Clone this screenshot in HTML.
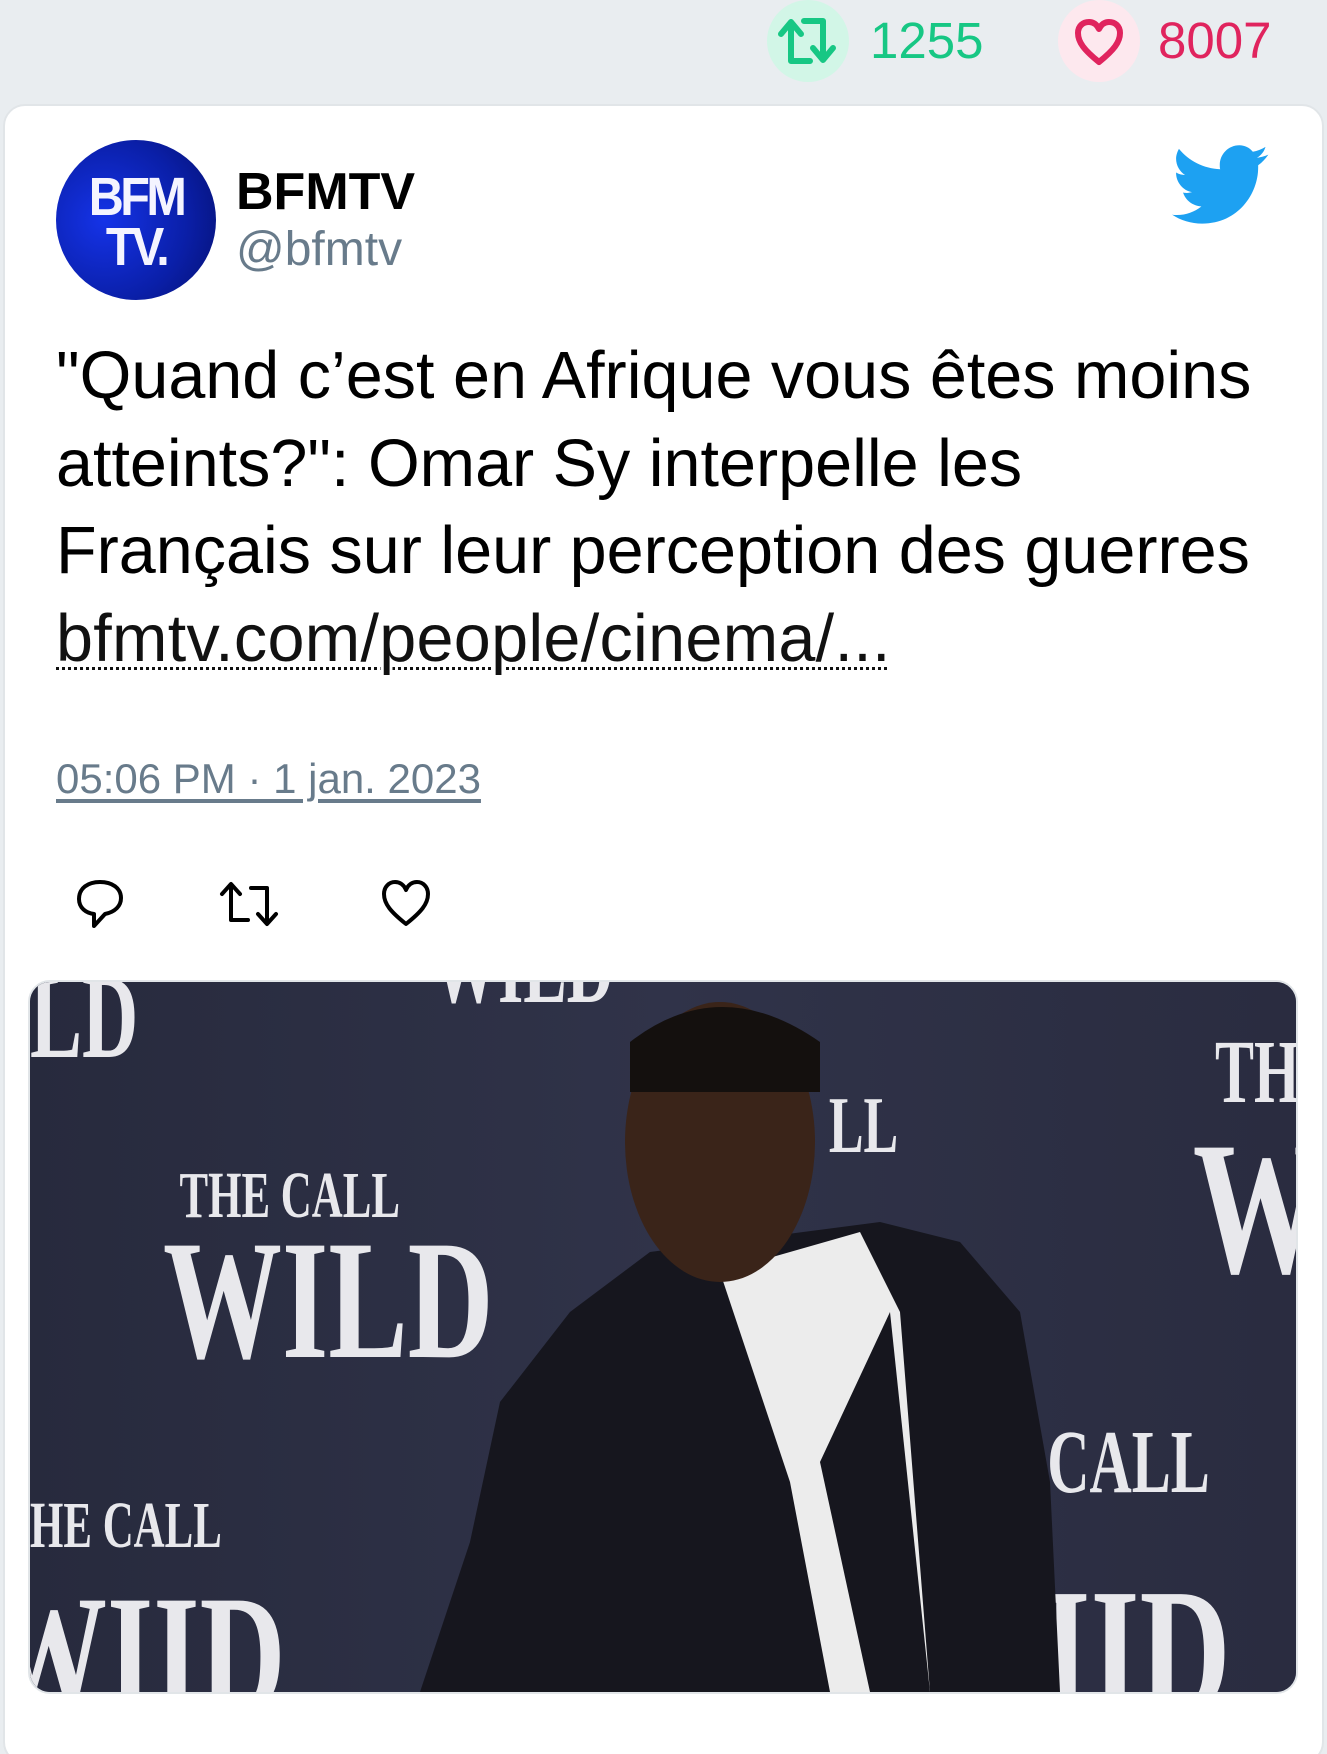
<!DOCTYPE html>
<html><head><meta charset="utf-8"><style>
*{margin:0;padding:0;box-sizing:border-box}
html,body{width:1327px;height:1754px;background:#e9edf0;font-family:"Liberation Sans",Arial,sans-serif;overflow:hidden;position:relative}
.abs{position:absolute}
.card{left:3px;top:104px;width:1321px;height:1660px;background:#fff;border:2px solid #e1e5e8;border-radius:22px}
.cnt{font-size:51px;line-height:50px;top:16px}
.txt{left:56px;top:333px;font-size:66.5px;line-height:87.5px;color:#000;width:1300px;white-space:nowrap}
.txt a{color:#111;text-decoration:underline dotted;text-decoration-thickness:3px;text-underline-offset:6px;letter-spacing:0.3px}
.ts{left:56px;top:755px;font-size:42px;color:#687b8b;text-decoration:underline;text-underline-offset:6px}
</style></head><body>
<div class="abs" style="left:767px;top:0;width:82px;height:82px;border-radius:50%;background:#d2f6e7"></div>
<svg class="abs" style="left:778px;top:16px" width="60" height="50" viewBox="0 0 60 50"><g fill="none" stroke="#17c784" stroke-width="6" stroke-linejoin="round" stroke-linecap="round"><path d="M13 45 V10 M3 18 L13 6 L23 18 M13 45 H32"/><path d="M45 5 V40 M35 32 L45 44 L55 32 M45 5 H26"/></g></svg>
<div class="abs cnt" style="left:870px;color:#17c784">1255</div>
<div class="abs" style="left:1058px;top:0;width:82px;height:82px;border-radius:50%;background:#fde8ee"></div>
<svg class="abs" style="left:1074px;top:18px" width="50" height="48" viewBox="0 0 50 48"><path d="M25 44 C10 32 4 24 4 15 C4 8 9 4 15 4 C20 4 23 7 25 11 C27 7 30 4 35 4 C41 4 46 8 46 15 C46 24 40 32 25 44Z" fill="none" stroke="#e0245e" stroke-width="6" stroke-linejoin="round"/></svg>
<div class="abs cnt" style="left:1158px;color:#e0245e">8007</div>

<div class="abs card"></div>
<div class="abs" style="left:56px;top:140px;width:160px;height:160px;border-radius:50%;background:radial-gradient(circle at 30% 50%,#1533e8,#0a1fa8 60%,#061070)"></div>
<div class="abs" style="left:76px;top:172px;width:120px;font:bold 54px/50px 'Liberation Sans';color:#f4f4ff;text-align:center;letter-spacing:-4px;transform:scaleX(0.9)">BFM<br>TV.</div>
<div class="abs" style="left:236px;top:162px;font-weight:bold;font-size:52px;color:#000">BFMTV</div>
<div class="abs" style="left:236px;top:222px;font-size:48px;color:#687b8b">@bfmtv</div>
<svg class="abs" style="left:1172px;top:145px" width="98" height="80" viewBox="0 0 24 19.5"><path fill="#1da1f2" d="M23.6 2.3c-.9.4-1.8.6-2.8.8 1-.6 1.8-1.6 2.1-2.7-.9.6-2 1-3.1 1.2C19 .6 17.8 0 16.5 0c-2.7 0-4.8 2.2-4.8 4.8 0 .4 0 .8.1 1.1C7.7 5.7 4.1 3.8 1.7.9c-.4.7-.7 1.6-.7 2.4 0 1.7.9 3.2 2.2 4-.8 0-1.5-.2-2.2-.6v.1c0 2.3 1.7 4.3 3.9 4.7-.4.1-.8.2-1.3.2-.3 0-.6 0-.9-.1.6 1.9 2.4 3.3 4.5 3.4-1.7 1.3-3.7 2.1-6 2.1-.4 0-.8 0-1.2-.1 2.1 1.4 4.7 2.2 7.4 2.2 8.9 0 13.7-7.4 13.7-13.7v-.6c1-.7 1.8-1.6 2.5-2.6z"/></svg>

<div class="abs txt">"Quand c’est en Afrique vous êtes moins<br>atteints?": Omar Sy interpelle les<br>Français sur leur perception des guerres<br><a>bfmtv.com/people/cinema/...</a></div>
<div class="abs ts">05:06 PM · 1 jan. 2023</div>

<svg class="abs" style="left:74px;top:878px" width="52" height="52" viewBox="0 0 52 52"><path d="M26 4 C14 4 5 10 5 21 C5 30 12 35 20 36 L20 48 L31 36 C41 34 47 28 47 20 C47 10 38 4 26 4Z" fill="none" stroke="#000" stroke-width="4" stroke-linejoin="round"/></svg>
<svg class="abs" style="left:218px;top:880px" width="64" height="48" viewBox="0 0 64 48"><g fill="none" stroke="#000" stroke-width="4" stroke-linejoin="round" stroke-linecap="round"><path d="M13 5 V40 H30 M4 14 L13 4 L22 14"/><path d="M49 43 V8 H33 M40 34 L49 44 L58 34"/></g></svg>
<svg class="abs" style="left:380px;top:878px" width="52" height="50" viewBox="0 0 52 50"><path d="M26 46 C11 34 4 26 4 16 C4 9 9 4 15 4 C20 4 24 7 26 12 C28 7 32 4 37 4 C43 4 48 9 48 16 C48 26 41 34 26 46Z" fill="none" stroke="#000" stroke-width="4" stroke-linejoin="round"/></svg>

<div class="abs" style="left:28px;top:980px;width:1270px;height:714px;border:2px solid #e1e5e8;border-radius:22px;overflow:hidden;background:#2c2e44">
<svg width="1266" height="710" viewBox="0 0 1266 710" style="display:block">
<defs><linearGradient id="bg" x1="0" x2="1"><stop offset="0" stop-color="#272a3d"/><stop offset="0.5" stop-color="#303349"/><stop offset="1" stop-color="#2a2c40"/></linearGradient></defs>
<rect width="1266" height="710" fill="url(#bg)"/>
<g fill="#e8e8ec" font-family="Liberation Serif,serif" font-weight="bold">
<text x="0" y="75" font-size="120" transform="scale(0.65,1)">LD</text>
<text x="230" y="235" font-size="66" transform="scale(0.65,1)">THE CALL</text>
<text x="190" y="375" font-size="170" transform="scale(0.7,1)">WILD</text>
<text x="0" y="565" font-size="66" transform="scale(0.65,1)">HE CALL</text>
<text x="-60" y="730" font-size="170" transform="scale(0.7,1)">WIID</text>
<text x="1823" y="120" font-size="90" transform="scale(0.65,1)">TH</text>
<text x="1661" y="290" font-size="190" transform="scale(0.7,1)">W</text>
<text x="1565" y="510" font-size="90" transform="scale(0.65,1)">CALL</text>
<text x="1445" y="730" font-size="180" transform="scale(0.7,1)">IID</text>
<text x="1229" y="170" font-size="80" transform="scale(0.65,1)">LL</text>
<text x="620" y="20" font-size="100" transform="scale(0.65,1)">WILD</text>
</g>
<path fill="#16161e" d="M620 270 L540 330 L470 420 L440 560 L390 710 L1030 710 L1020 500 L990 330 L930 260 L850 240 Z"/>
<path fill="#ececec" d="M690 290 L830 250 L870 330 L900 710 L800 710 L760 500 Z"/>
<path fill="#16161e" d="M790 480 L860 330 L900 710 L840 710 Z"/>
<ellipse cx="690" cy="160" rx="95" ry="140" fill="#3a2419"/>
<path d="M600 60 Q690 -10 790 60 L790 110 L600 110 Z" fill="#14100e"/>
</svg></div>
</body></html>
